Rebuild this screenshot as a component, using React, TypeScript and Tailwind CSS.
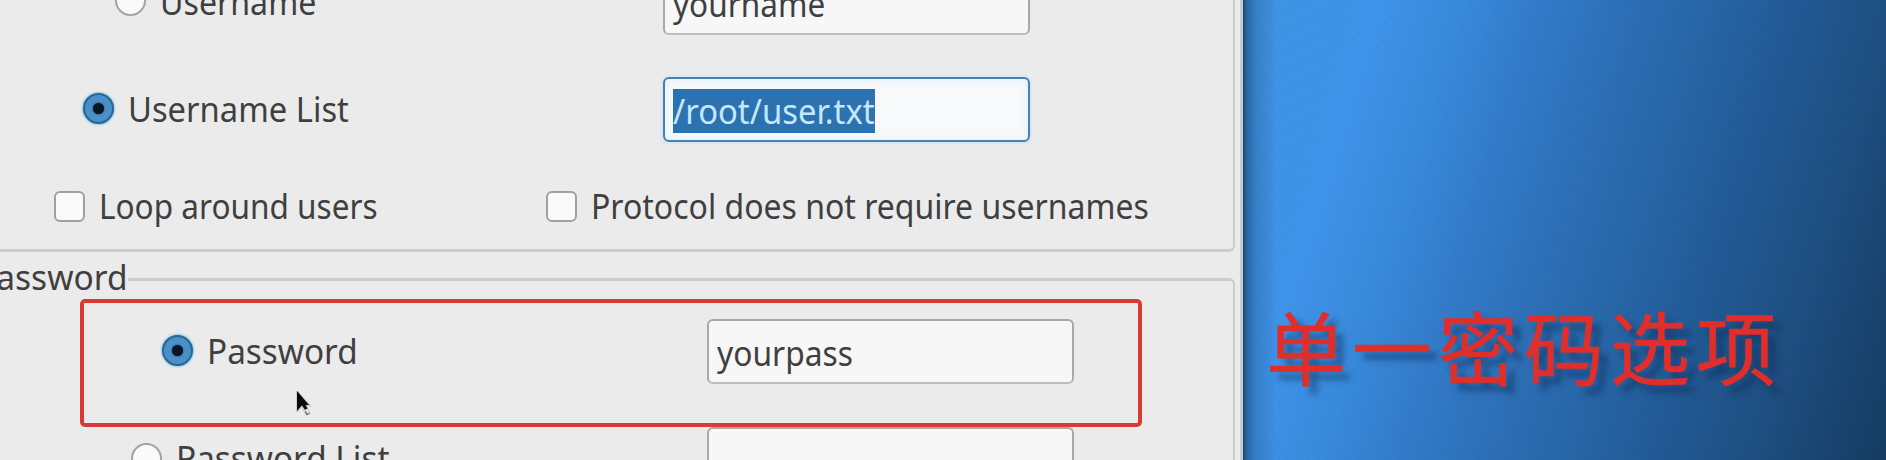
import React from "react";

const text = "block w-max whitespace-pre font-['Noto_Sans',sans-serif] text-[34px] leading-[44px] text-[#3f3f3f] origin-left";

function Radio({ checked = false }: { checked?: boolean }) {
  return checked ? (
    <span className="flex h-[31px] w-[31px] shrink-0 items-center justify-center rounded-full border-2 border-[#2a678f] bg-[#4b8fc8] shadow-[0_0_3px_#3aa0e0]">
      <span className="h-[11px] w-[11px] rounded-full bg-[#0a1622] shadow-[0_0_2px_#14304a]" />
    </span>
  ) : (
    <span className="h-[31px] w-[31px] shrink-0 rounded-full border-2 border-[#a3a3a3] bg-[#fafafa]" />
  );
}

function Check() {
  return <span className="h-[31px] w-[31px] shrink-0 rounded-[6px] border-2 border-[#a0a0a0] bg-[#fafafa]" />;
}

function Label({ children, fit }: { children: string; fit: string }) {
  return <span className={`${text} ${fit}`}>{children}</span>;
}

function Field({ children, fit = "", focus = false }: { children?: string; fit?: string; focus?: boolean }) {
  return (
    <span
      className={
        focus
          ? "flex h-[65px] w-[367px] shrink-0 items-center rounded-[6px] border-[2px] border-[#4a7fae] bg-[#f7f9fb] pl-2 shadow-[0_0_4px_#b8dcf8,inset_0_0_5px_2px_#e2f3ff]"
          : "flex h-[65px] w-[367px] shrink-0 items-center rounded-[6px] border-[2px] border-[#a8a8a8] border-b-[#bcbcbc] bg-[#f7f7f7] pl-2 pt-[3px]"
      }
    >
      {focus ? (
        <span className="mt-[2px] h-[44px] w-[202px] bg-[#2d72b0]">
          <span className={`${text} ${fit} !text-[#c4e8ff]`}>{children}</span>
        </span>
      ) : (
        <span className={`${text} ${fit}`}>{children}</span>
      )}
    </span>
  );
}

export default function App() {
  return (
    <div className="flex h-[460px] w-[1886px] overflow-hidden bg-[#ebebeb]">
      <main className="relative h-[460px] w-[1243px] shrink-0 overflow-hidden border-r-[3px] border-[#c3ccd3] bg-[#ebebeb]">
        <section className="-mt-[38px] h-[290px] w-[1235px] rounded-br-[6px] border-b-[3px] border-r-[2px] border-[#cccccc]">
          <div className="flex h-[80px] items-center pl-[115px]">
            <span className="-mt-[3px] flex"><Radio /></span>
            <div className="ml-[14px] w-[503px]"><Label fit="scale-x-[0.945]">Username</Label></div>
            <Field fit="scale-x-[0.928]">yourname</Field>
          </div>
          <div className="flex h-[135px] items-center pl-[83px]">
            <span className="-mt-[2px] flex"><Radio checked /></span>
            <div className="-mt-[2px] ml-[14px] w-[535px]"><Label fit="scale-x-[0.963]">Username List</Label></div>
            <Field focus fit="scale-x-[0.966]">/root/user.txt</Field>
          </div>
          <div className="flex h-[58px] items-center pl-[54px]">
            <Check />
            <div className="ml-[14px] w-[447px]"><Label fit="scale-x-[0.928]">Loop around users</Label></div>
            <Check />
            <div className="ml-[14px]"><Label fit="scale-x-[0.941]">Protocol does not require usernames</Label></div>
          </div>
        </section>
        <section className="mt-[26px] h-[220px] w-[1235px] rounded-tr-[6px] border-r-[2px] border-t-[3px] border-[#cccccc]">
          <div className="-ml-[24px] -mt-[26px] h-[44px] w-[152px] bg-[#ebebeb]"><Label fit="scale-x-[0.985]">Password</Label></div>
          <div className="relative z-10 ml-[80px] flex h-[128px] w-[1062px] rounded-[5px] border-4 border-[#da3a36] pl-[78px] pt-[16px]">
            <div className="flex h-[65px] items-center">
              <span className="-mt-[2px] flex"><Radio checked /></span>
              <div className="-mt-[2px] ml-[14px] w-[500px]"><Label fit="scale-x-[0.98]">Password</Label></div>
              <Field fit="scale-x-[0.934]">yourpass</Field>
            </div>
          </div>
          <div className="flex h-[65px] items-center pl-[131px]">
            <span className="-mt-[3px] flex"><Radio /></span>
            <div className="-mt-[4px] ml-[14px] w-[531px]"><Label fit="scale-x-[0.98]">Password List</Label></div>
            <Field />
          </div>
        </section>
        <svg className="absolute left-[295px] top-[389px]" width="20" height="30" viewBox="0 0 20 30">
          <path d="M2 2V23L7 18L11 26L15 24L11 16.5L16 17Z" fill="#f4f4f4" stroke="#bbb" strokeWidth="1" />
          <path d="M2 2V22L7 16.5L10 21L12.5 19.5L10.5 16H14Z" fill="#080808" />
          <path d="M10.5 22L12 25.5L14.5 24.2" fill="none" stroke="#777" strokeWidth="1.5" />
        </svg>
      </main>
      <aside className="relative flex h-[460px] w-[643px] items-start bg-[linear-gradient(90deg,#174a72_0px,#2a66a2_4px,rgba(45,105,165,0.5)_12px,rgba(60,130,190,0)_34px),repeating-linear-gradient(127deg,rgba(20,70,130,0.03)_0px,rgba(20,70,130,0)_3px,rgba(20,70,130,0)_5px,rgba(20,70,130,0.03)_8px),linear-gradient(107deg,#3f94e2_0%,#3f93e9_18%,#388ada_28%,#337bc9_38%,#2e70b8_48%,#2867a8_58%,#225994_71%,#1e4e80_83%,#153b60_100%)] pl-[23px] pt-[286px]">
        <span className="whitespace-nowrap font-['Noto_Sans_CJK_SC',sans-serif] text-[80px] leading-[116px] tracking-[6px] text-[#e02f2b] [-webkit-text-stroke:0.6px_#e02f2b] [text-shadow:8px_8px_6px_rgba(10,40,80,0.5)]">单一密码选项</span>
      </aside>
    </div>
  );
}
